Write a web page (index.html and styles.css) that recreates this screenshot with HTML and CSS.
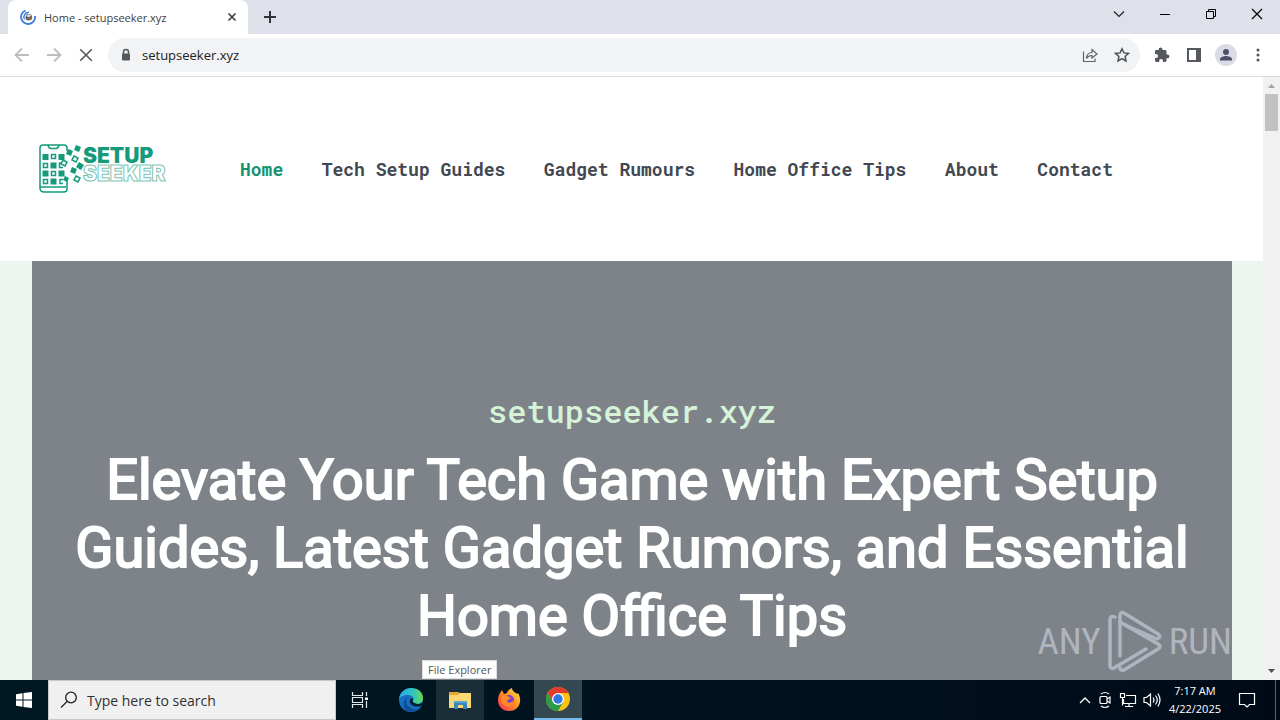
FILE: index.html
```html
<!DOCTYPE html>
<html lang="en">
<head>
<meta charset="utf-8">
<title>Home - setupseeker.xyz</title>
<link rel="stylesheet" href="styles.css">
</head>
<body>
<div class="desktop">
  <div class="tabstrip">
    <div class="tab">
      <svg class="favicon" width="16" height="16" viewBox="0 0 16 16" fill="none"><path d="M15 7A7 7 0 1 1 5.500 1.500" stroke="#3b7de0" stroke-width="1.800"/><path d="M4.500 10.500A4.600 4.600 0 0 1 9 3.500" stroke="#3b7de0" stroke-width="1.400"/><circle cx="8.800" cy="8.300" r="3.300" fill="#5d6168"/><path d="M6 7l3-2 2.500 1.500-2.800 1.800z" fill="#d5d8dc"/><path d="M8.800 8.700l2.700-1.300v3L8.900 11z" fill="#a6673a"/></svg>
      <span class="tab-title">Home - setupseeker.xyz</span>
      <button class="bare" aria-label="Close tab"><svg width="10" height="10" viewBox="0 0 10 10"><path d="M1.500 1.500l7 7M8.500 1.500l-7 7" stroke="#3c4043" stroke-width="1.700"/></svg></button>
    </div>
    <button class="bare new-tab" aria-label="New tab"><svg width="12" height="12" viewBox="0 0 12 12"><path d="M6 0v12M0 6h12" stroke="#303338" stroke-width="2"/></svg></button>
    <div class="window-controls">
      <button class="bare" aria-label="Search tabs"><svg width="12" height="12" viewBox="0 0 12 12" fill="none"><path d="M1 3.500l5 5 5-5" stroke="#222" stroke-width="1.200"/></svg></button>
      <button class="bare" aria-label="Minimize"><svg width="12" height="12" viewBox="0 0 12 12"><path d="M1 6.500h10" stroke="#000"/></svg></button>
      <button class="bare" aria-label="Restore"><svg width="12" height="12" viewBox="0 0 12 12" fill="none"><path d="M1.500 3.500h7v7h-7zM3.500 3.500v-2h7v7h-2" stroke="#000"/></svg></button>
      <button class="bare" aria-label="Close"><svg width="12" height="12" viewBox="0 0 12 12"><path d="M1 1l10 10M11 1L1 11" stroke="#000" stroke-width="1.200"/></svg></button>
    </div>
  </div>

  <div class="toolbar">
    <button class="bare nav-button" aria-label="Back"><svg width="16" height="16" viewBox="0 0 16 16" fill="none"><path d="M15 8H2M8 1.500L1.500 8 8 14.500" stroke="#bbbdc0" stroke-width="1.800"/></svg></button>
    <button class="bare nav-button" aria-label="Forward"><svg width="16" height="16" viewBox="0 0 16 16" fill="none"><path d="M1 8h13M8 1.500L14.500 8 8 14.500" stroke="#bbbdc0" stroke-width="1.800"/></svg></button>
    <button class="bare nav-button" aria-label="Stop"><svg width="16" height="16" viewBox="0 0 16 16"><path d="M2.200 2.200l11.600 11.600M13.800 2.200L2.200 13.800" stroke="#55585c" stroke-width="1.600"/></svg></button>
    <div class="omnibox">
      <svg width="12" height="14" viewBox="0 0 12 14"><path d="M3.500 6V4a2.500 2.500 0 0 1 5 0v2" fill="none" stroke="#55585c" stroke-width="1.500"/><rect x="2" y="5.500" width="8" height="7" rx="1" fill="#55585c"/></svg>
      <input class="url" type="text" value="setupseeker.xyz" aria-label="Address">
      <button class="bare" aria-label="Share"><svg width="16" height="16" viewBox="0 0 16 16" fill="none" stroke="#5f6368" stroke-width="1.200"><path d="M1.500 4.500v10h11.500v-3"/><path d="M4.500 11.500c.3-4 2.200-6 5.500-6V2.500L15 7l-5 4V8.500c-2.500 0-4.100.8-5.500 3z"/></svg></button>
      <button class="bare" aria-label="Bookmark"><svg width="16" height="16" viewBox="0 0 16 16" fill="none"><path d="M8 1.800l1.900 4.100 4.500.5-3.300 3.100.9 4.500L8 11.700 4 14l.9-4.500L1.600 6.400l4.500-.5z" stroke="#505358" stroke-width="1.500"/></svg></button>
    </div>
    <button class="bare tool" aria-label="Extensions"><svg width="16" height="16" viewBox="0 0 16 16"><path d="M13.500 7.500h-1V4.400c0-.8-.6-1.400-1.400-1.400H8.500V2.300a1.900 1.900 0 0 0-3.800 0V3H2.400C1.600 3 1 3.600 1 4.400v2.500h1a2 2 0 0 1 0 4H1v2.700c0 .8.600 1.400 1.400 1.400h2.800v-1a1.900 1.900 0 0 1 3.800 0v1h2.100c.8 0 1.400-.6 1.400-1.400v-2.300h1a1.900 1.900 0 0 0 0-3.800z" fill="#55585d"/></svg></button>
    <button class="bare tool" aria-label="Side panel"><svg width="16" height="16" viewBox="0 0 16 16"><path d="M1 1h14v14H1zM3 3v10h7V3z" fill="#55585d" fill-rule="evenodd"/></svg></button>
    <button class="bare tool" aria-label="Profile"><svg width="22" height="22" viewBox="0 0 22 22"><circle cx="11" cy="11" r="11" fill="#dadce5"/><circle cx="11" cy="8" r="3" fill="#4b5168"/><path d="M5 16.500v-1.500c0-2 4-3 6-3s6 1 6 3v1.500z" fill="#4b5168"/></svg></button>
    <button class="bare tool" aria-label="Menu"><svg width="16" height="16" viewBox="0 0 16 16" fill="#505358"><circle cx="8" cy="3" r="1.500"/><circle cx="8" cy="8" r="1.500"/><circle cx="8" cy="13" r="1.500"/></svg></button>
  </div>

  <div class="viewport">
    <div class="site">
      <header class="site-header">
        <a class="logo" href="#" aria-label="Setup Seeker">
          <svg width="136" height="52" viewBox="0 0 136 52">
            <g fill="none" stroke="#159a7c" stroke-width="1.500">
              <path d="M31 8V5q0-3-3-3H7Q4 2 4 5v40q0 4 4 4h20q3 0 3-3V35M4 44h26M12 2.500q1 3 3 3h5q2 0 3-3"/>
              <path d="M15.500 11.500h4v4h-4zM7.500 20.500h4v4h-4zM26 20h-2.500v4.500H27M15.500 28.500h4v4h-4zM7.500 36.500h4v4h-4zM27 40.500h-3v-4h3"/>
              <path d="M38 13l4 2-2 4-4-2zM27 17l4 2-2 4-4-2zM40 33l4 2-2 4-4-2z"/>
            </g>
            <path d="M6.500 11h6v6h-6zM22.500 11h6v6h-6zM14.500 19.500h6v6h-6zM6.500 27.500h6v6h-6zM22.500 27.500h6v6h-6zM14.500 35.500h6v6h-6zM40 2l5 2-2 5-5-2zM32 6l5 2-2 5-5-2zM43 19l5 3-3 5-5-3zM36 24l5 2-2 5-5-2zM29 33l4 2-2 4-4-2z" fill="#159a7c"/>
            <text class="logo-top" x="47" y="20">SETUP</text>
            <text class="logo-bottom" x="47" y="38">SEEKER</text>
          </svg>
        </a>
        <nav class="site-nav">
          <a class="current" href="#">Home</a>
          <a href="#">Tech Setup Guides</a>
          <a href="#">Gadget Rumours</a>
          <a href="#">Home Office Tips</a>
          <a href="#">About</a>
          <a href="#">Contact</a>
        </nav>
      </header>
      <main class="hero">
        <p class="hero-name">setupseeker.xyz</p>
        <h1>Elevate Your Tech Game with Expert Setup Guides, Latest Gadget Rumors, and Essential Home Office Tips</h1>
      </main>
    </div>
    <div class="scrollbar">
      <svg width="17" height="17" viewBox="0 0 17 17"><path d="M5 11l3.500-4 3.500 4z" fill="#a3a3a3"/></svg>
      <div class="thumb"></div>
      <svg width="17" height="17" viewBox="0 0 17 17"><path d="M5 6l3.500 4L12 6z" fill="#505050"/></svg>
    </div>
    <div class="watermark">
      <span>ANY</span>
      <svg width="56" height="64" viewBox="0 0 56 64" fill="none" stroke="currentColor" stroke-width="3.500" stroke-linejoin="round" stroke-linecap="round"><path d="M8 8q-5-2-5 3v46q0 3 4 2l32-19"/><path d="M13 47V7q0-5 4-3l34 21q4 3-1 5L18 16"/><path d="M13 13l38 22q4 3 0 5L17 61q-4 1-4-2"/></svg>
      <span>RUN</span>
    </div>
    <div class="tooltip">File Explorer</div>
  </div>

  <footer class="taskbar">
    <button class="bare start" aria-label="Start"><svg width="16" height="16" viewBox="0 0 16 16" fill="#fff"><path d="M0 2.200l6.500-.9v6.200H0zM7.500 1.100L16 0v7.500H7.500zM0 8.500h6.500v6.200L0 13.800zM7.500 8.500H16V16l-8.500-1.100z"/></svg></button>
    <label class="search">
      <svg width="18" height="18" viewBox="0 0 18 18" fill="none" stroke="#222" stroke-width="1.300"><circle cx="11" cy="6.500" r="5.300"/><path d="M7 10.500L1 16.500"/></svg>
      <input type="text" placeholder="Type here to search" aria-label="Search">
    </label>
    <div class="apps">
      <button class="bare app" aria-label="Task View"><svg width="18" height="18" viewBox="0 0 18 18" fill="none" stroke="#e4e9eb" stroke-width="1.200"><path d="M1.500 1v3.500h10V1M1.500 17v-3.500h10V17M1.500 6.500h10v5h-10zM15.500 1v4M15.500 10v7"/><path d="M14 6.500h3v2.500h-3z" fill="#fff" stroke="none"/></svg></button>
      <button class="bare app" aria-label="Edge"><svg width="26" height="26" viewBox="0 0 26 26"><defs><linearGradient id="edge-top"><stop offset="0" stop-color="#2aa9e8"/><stop offset=".6" stop-color="#31c7bd"/><stop offset="1" stop-color="#69d94f"/></linearGradient></defs><circle cx="13" cy="13" r="12" fill="#176fc4"/><path d="M1 12C2 5 7 1 13 1c7 0 12 4 12 10 0 4-3 6-6 6-3 0-5-1-4-3 2-3-1-6-5-6-5 0-8 2-9 4z" fill="url(#edge-top)"/><path d="M9 10c-2 5 0 10 6 12 3 1 6 0 8-2-3 5-10 6-14 4C4 21 5 12 9 10z" fill="#134f98"/><path d="M14 11c-3 1-3 5 0 7 3 2 7 2 11 0v-3c-3 3-8 2-10 0-1-1 1-2-1-4z" fill="#03202e"/></svg></button>
      <button class="bare app hovered" aria-label="File Explorer"><svg width="24" height="20" viewBox="0 0 24 20"><path d="M1 2h9l2 1h11v15H1z" fill="#e9a92e"/><path d="M1 5h9l2-2h11v15H1z" fill="#fbd871"/><path d="M6 11h13v8h-4v-4h-5v4H6z" fill="#3788bd"/><path d="M6 11h13v2H6z" fill="#56a6d6"/></svg></button>
      <button class="bare app" aria-label="Firefox"><svg width="24" height="24" viewBox="0 0 24 24"><defs><linearGradient id="fox" x1="1" y1="0" x2="0" y2="1"><stop offset="0" stop-color="#ffe94a"/><stop offset=".5" stop-color="#ff8a20"/><stop offset="1" stop-color="#f5266a"/></linearGradient></defs><path d="M3 5l2-3 2 4 3-1c1-3 3-4 5-5 0 3 3 4 5 6l1-1c5 8 1 18-9 18C3 23-2 14 3 5z" fill="url(#fox)"/><circle cx="12" cy="12" r="5" fill="#7a3bd8"/><path d="M5 8c3-2 5-1 7 1l2 1c-1 2-3 1-4 3 1 3 5 2 6-1 1 5-3 7-7 6-4-1-6-5-4-10z" fill="#ff8a26"/></svg></button>
      <button class="bare app active" aria-label="Chrome"><svg width="24" height="24" viewBox="0 0 24 24"><circle cx="12" cy="12" r="12" fill="#fbc116"/><path d="M1.600 6A12 12 0 0 1 22.400 6H12L6.800 15z" fill="#e23b2e"/><path d="M1.600 6A12 12 0 0 0 12 24l5.200-9H6.800z" fill="#2a9c4a"/><circle cx="12" cy="12" r="6" fill="#fff"/><circle cx="12" cy="12" r="4.700" fill="#2f78e6"/></svg></button>
    </div>
    <div class="tray">
      <svg width="12" height="8" viewBox="0 0 12 8" fill="none"><path d="M1 7l5-5 5 5" stroke="#fff" stroke-width="1.300"/></svg>
      <svg width="16" height="18" viewBox="0 0 16 18" fill="none" stroke="#fff" stroke-width="1.200"><rect x="3" y="5.500" width="7" height="7" rx="1"/><path d="M10 8l3-2v6l-3-2M4 3q4-3 8 0M4 15q4 3 8 0"/></svg>
      <svg width="18" height="16" viewBox="0 0 18 16" fill="none" stroke="#fff" stroke-width="1.200"><path d="M7 3.500h9.500v8H4.500V7M6 14.500h8M10 11.500v3M1.500 1.500h4v4h-4zM3.500 5.500v8"/></svg>
      <svg width="18" height="16" viewBox="0 0 18 16" fill="none" stroke="#fff" stroke-width="1.200"><path d="M1 5.500h2.500L7.500 2v12l-4-3.500H1zM10 5.500q2 2.500 0 5M12.500 3.500q3.500 4.500 0 9M15 1.500q4 6.500 0 13"/></svg>
      <div class="clock"><span>7:17 AM</span><span>4/22/2025</span></div>
      <svg class="notice" width="18" height="18" viewBox="0 0 18 18" fill="none"><path d="M1.500 2.500h15v11h-5L9 16l-2.500-2.500h-5z" stroke="#fff" stroke-width="1.200"/></svg>
    </div>
  </footer>
</div>
</body>
</html>
```
FILE: styles.css
```css
* { box-sizing: border-box; }
body { margin: 0; font-family: "Open Sans", "Noto Sans", sans-serif; }
svg { display: block; flex: none; }
.bare {
  display: grid;
  place-items: center;
  padding: 0;
  border: 0;
  background: none;
}
.desktop { display: flex; flex-direction: column; height: 100vh; overflow: hidden; }

.tabstrip { display: flex; height: 34px; flex: none; padding-left: 8px; background: #dee1e9; }
.tab {
  display: flex;
  align-items: center;
  width: 240px;
  padding: 0 11px 0 12px;
  gap: 8px;
  background: #fff;
  border-radius: 8px 8px 0 0;
}
.tab-title { flex: 1; font-size: 11px; color: #3c4043; white-space: nowrap; }
.new-tab { width: 44px; }
.window-controls { display: flex; margin-left: auto; padding-bottom: 6px; }
.window-controls .bare { width: 46px; }

.toolbar {
  display: flex;
  align-items: center;
  height: 43px;
  flex: none;
  padding: 0 6px;
  background: #fff;
  border-bottom: 1px solid #d8dadd;
}
.nav-button, .tool { width: 32px; height: 32px; flex: none; }
.omnibox {
  display: flex;
  flex: 1;
  align-items: center;
  gap: 10px;
  height: 34px;
  margin: 0 6px;
  padding: 0 10px 0 12px;
  border-radius: 17px;
  background: #f1f3f4;
}
.omnibox .bare { margin-left: 6px; }
.url { flex: 1; min-width: 0; padding: 0; border: 0; background: none; font: 13px "Open Sans", sans-serif; color: #202124; }

.viewport { position: relative; display: flex; flex: 1; min-height: 0; }
.site { flex: 1; min-width: 0; overflow: hidden; background: #edf5ee; }
.site-header { display: flex; align-items: center; height: 184px; padding: 0 150px 0 36px; background: #fff; }
.logo-top, .logo-bottom { font-family: "Inter", sans-serif; font-weight: 900; font-size: 21px; fill: #159a7c; }
.logo-bottom { fill: #fff; stroke: #159a7c; stroke-width: 1px; stroke-opacity: 0.6; }
.site-nav { display: flex; flex: 1; justify-content: space-between; margin-left: 68px; }
.site-nav a {
  font: bold 18px "Roboto Mono", "Liberation Mono", monospace;
  color: #424851;
  text-decoration: none;
  white-space: nowrap;
}
.site-nav .current { color: #159370; }
.hero {
  height: 100%;
  margin: 0 31px 0 32px;
  padding: 128px 32px 0;
  background: #7e838a;
  text-align: center;
}
.hero-name { margin: 0 0 13px; font: 500 32px/44px "Roboto Mono", "DejaVu Sans Mono", monospace; color: #d5f3d9; }
.hero h1 {
  margin: 0;
  font: 400 56px/68px Roboto, sans-serif;
  color: #fff;
  -webkit-text-stroke: 2px #fff;
}
.scrollbar { display: flex; flex-direction: column; width: 17px; background: #f1f1f1; }
.thumb { height: 37px; margin: 0 2px auto; background: #c1c1c1; }
.watermark {
  position: absolute;
  right: 48px;
  bottom: 7px;
  display: flex;
  align-items: center;
  gap: 6px;
  color: #b0b4be;
  font: 37px "Roboto Condensed", "Roboto", sans-serif;
}
.tooltip {
  position: absolute;
  left: 422px;
  bottom: 1px;
  padding: 0 5px;
  border: 1px solid #ddd;
  background: #fff;
  font-size: 11px;
  line-height: 17px;
  color: #555;
}

.taskbar { display: flex; height: 40px; flex: none; background: linear-gradient(90deg, #001823, #00121e 60%, #000a17); }
.start { width: 48px; }
.search {
  display: flex;
  align-items: center;
  gap: 9px;
  width: 288px;
  padding: 0 11px;
  border: 1px solid #c8c8c8;
  background: #f0f0f0;
}
.search input { flex: 1; min-width: 0; padding: 0; border: 0; background: none; font: 14px "Open Sans", sans-serif; }
.search input::placeholder { color: #303030; }
.apps { display: flex; gap: 1px; }
.app { width: 48px; }
.app:first-child { margin-right: 2px; }
.hovered { background: #1a2e37; }
.active { background: #334851; border-bottom: 2px solid #76b9ed; }
.tray { display: flex; align-items: center; gap: 6px; margin-left: auto; margin-right: 4px; padding-right: 19px; border-right: 1px solid #59616a; }
.clock { display: flex; flex-direction: column; align-items: center; margin-left: 2px; color: #fff; font-size: 11px; line-height: 18px; }
.notice { margin-left: 11px; }
```
